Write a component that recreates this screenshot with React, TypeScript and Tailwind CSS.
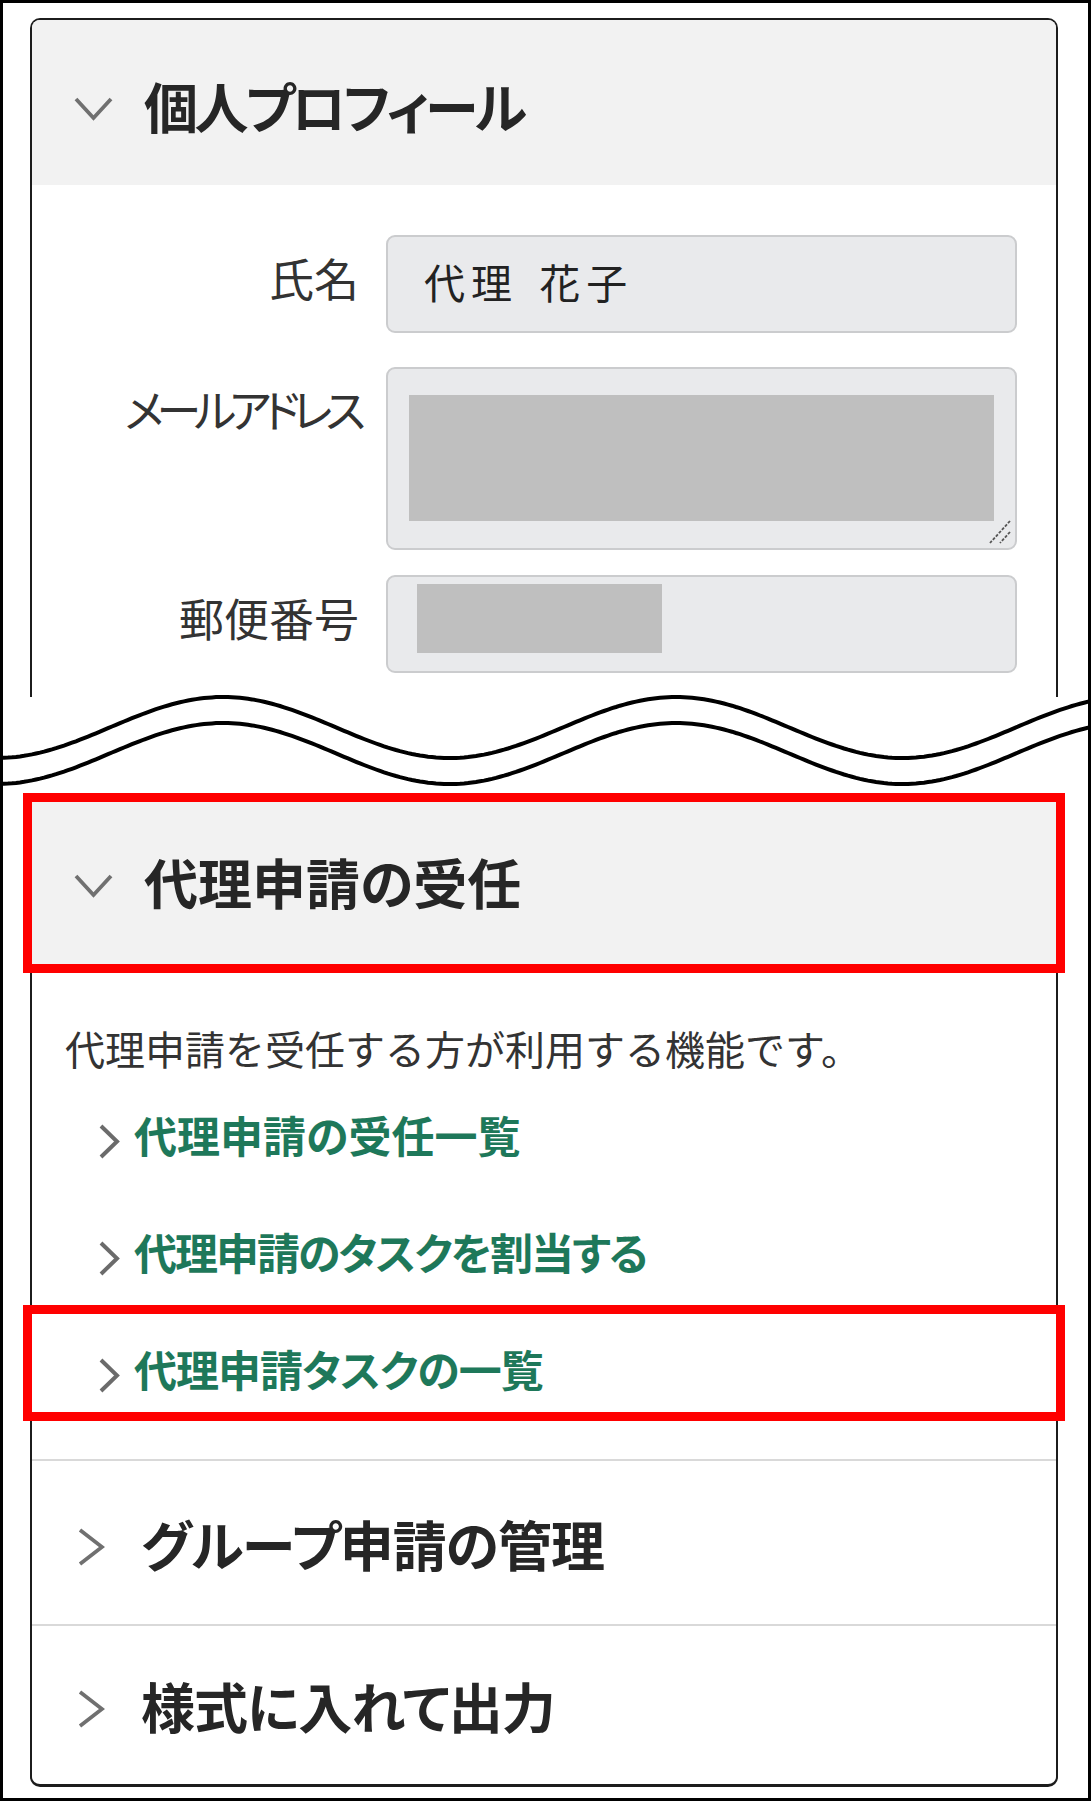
const FONT = "font-['Noto_Sans_CJK_JP','Noto_Sans',sans-serif]";

// y of the break line at x, in the wave svg's own coordinates
function wave(offset: number) {
  const pts: string[] = [];
  for (let x = -4; x <= 1096; x += 4) {
    const y = 37.5 + offset - 30.5 * Math.cos((2 * Math.PI * (x - 223)) / 453);
    pts.push(`${x},${y.toFixed(1)}`);
  }
  return pts;
}

function BreakLines() {
  const top = wave(0);
  const bottom = wave(26);
  return (
    <svg
      className="pointer-events-none absolute left-[-3px] top-[687px] h-[110px] w-[1091px] overflow-visible"
      viewBox="0 0 1091 110"
      aria-hidden
    >
      <polygon points={[...top, ...bottom.slice().reverse()].join(" ")} fill="#fff" />
      <polyline points={top.join(" ")} fill="none" stroke="#000" strokeWidth="4" />
      <polyline points={bottom.join(" ")} fill="none" stroke="#000" strokeWidth="4" />
    </svg>
  );
}

function ChevronDown() {
  return (
    <svg className="mt-[6px] h-[25px] w-[41px] shrink-0" viewBox="0 0 41 25" aria-hidden>
      <polyline points="3,3 20.5,22 38,3" fill="none" stroke="#707070" strokeWidth="3.8" />
    </svg>
  );
}

function ChevronRight() {
  return (
    <svg className="mt-[6px] h-[40px] w-[28px] shrink-0" viewBox="0 0 28 40" aria-hidden>
      <polyline points="3,3 25,20 3,37" fill="none" stroke="#707070" strokeWidth="3.8" />
    </svg>
  );
}

function LinkChevron() {
  return (
    <svg className="mt-[10px] h-[37px] w-[22px] shrink-0" viewBox="0 0 22 37" aria-hidden>
      <polyline points="3,3 19,18.5 3,34" fill="none" stroke="#6b6b6b" strokeWidth="4" />
    </svg>
  );
}

type HeaderProps = { title: string; open: boolean; titleClass: string };

function SectionHeader({ title, open, titleClass }: HeaderProps) {
  return (
    <div className="flex items-center">
      <div className={open ? "ml-[41px] flex w-[41px] justify-center" : "ml-[45px] flex w-[28px] justify-center"}>
        {open ? <ChevronDown /> : <ChevronRight />}
      </div>
      <span className={titleClass}>{title}</span>
    </div>
  );
}

function FieldLabel({ text, narrow }: { text: string; narrow?: boolean }) {
  return (
    <div
      className={
        narrow
          ? "w-[327px] shrink-0 whitespace-nowrap pt-[19px] text-right text-[45px] leading-none tracking-[-7px] text-[#333] [font-feature-settings:'palt']"
          : "w-[327px] shrink-0 pt-[20px] text-right text-[45px] leading-none text-[#333]"
      }
    >
      {text}
    </div>
  );
}

const links = [
  { label: "代理申請の受任一覧", cls: "tracking-[0px]" },
  { label: "代理申請のタスクを割当する", cls: "tracking-[-2px]" },
  { label: "代理申請タスクの一覧", cls: "tracking-[-1px]" },
];

export default function App() {
  return (
    <div className={`relative h-[1801px] w-[1091px] overflow-hidden border-[3px] border-black bg-white ${FONT}`}>
      {/* upper part of the card, cut by the break */}
      <div className="ml-[27px] mt-[15px] h-[679px] w-[1028px] overflow-hidden rounded-t-[10px] border-2 border-b-0 border-[#1c1c1c]">
        <div className="flex h-[165px] items-center bg-[#f2f2f2] pt-[6px]">
          <div className="w-full">
            <SectionHeader
              title="個人プロフィール"
              open
              titleClass="ml-[30px] whitespace-nowrap text-[54px] font-bold leading-none tracking-[-3.5px] text-[#262626] [font-feature-settings:'palt']"
            />
          </div>
        </div>

        <div className="pt-[50px]">
          <div className="flex">
            <FieldLabel text="氏名" />
            <div className="ml-[27px] flex h-[98px] w-[631px] items-center rounded-[9px] border-2 border-[#cbccce] bg-[#e9eaec] pb-[6px] pl-[36px] text-[41px] leading-none tracking-[6px] text-[#222] [word-spacing:6px]">
              代理 花子
            </div>
          </div>

          <div className="mt-[34px] flex">
            <FieldLabel text="メールアドレス" narrow />
            <div className="relative ml-[27px] h-[183px] w-[631px] rounded-[9px] border-2 border-[#cbccce] bg-[#e9eaec] pl-[21px] pt-[26px]">
              <div className="h-[126px] w-[585px] bg-[#bfbfbf]" />
              <svg className="absolute bottom-[3px] right-[3px] h-[26px] w-[24px]" viewBox="0 0 24 26" aria-hidden>
                <line x1="22" y1="2" x2="2" y2="24" stroke="#555" strokeWidth="1.8" strokeDasharray="3 1.5" />
                <line x1="22" y1="13" x2="12" y2="24" stroke="#555" strokeWidth="1.8" strokeDasharray="3 1.5" />
              </svg>
            </div>
          </div>

          <div className="mt-[25px] flex">
            <FieldLabel text="郵便番号" />
            <div className="ml-[27px] h-[98px] w-[631px] rounded-[9px] border-2 border-[#cbccce] bg-[#e9eaec] pl-[29px] pt-[7px]">
              <div className="h-[69px] w-[245px] bg-[#bfbfbf]" />
            </div>
          </div>
        </div>
      </div>

      <div className="h-[96px]" />

      {/* lower part of the card */}
      <div className="ml-[27px] h-[994px] w-[1028px] rounded-b-[10px] border-2 border-b-[3px] border-t-0 border-[#1c1c1c]">
        <div className="flex h-[172px] items-center bg-[#f2f2f2] pt-[6px]">
          <div className="w-full">
            <SectionHeader
              title="代理申請の受任"
              open
              titleClass="ml-[30px] whitespace-nowrap text-[54px] font-bold leading-none text-[#262626] [font-feature-settings:'palt']"
            />
          </div>
        </div>

        <div className="h-[494px] pl-[33px] pt-[63px]">
          <p className="text-[40px] leading-none text-[#333]">代理申請を受任する方が利用する機能です。</p>
          <ul className="mt-[45px] flex flex-col gap-[70px]">
            {links.map((l) => (
              <li key={l.label} className="flex items-start">
                <span className="ml-[33px]">
                  <LinkChevron />
                </span>
                <span
                  className={`ml-[14px] whitespace-nowrap text-[43px] font-bold leading-none text-[#1e785a] [font-feature-settings:'palt'] ${l.cls}`}
                >
                  {l.label}
                </span>
              </li>
            ))}
          </ul>
        </div>

        <div className="flex h-[165px] items-center border-t-2 border-[#d9d9d9] pt-[2px]">
          <SectionHeader
            title="グループ申請の管理"
            open={false}
            titleClass="ml-[36px] whitespace-nowrap text-[54px] font-bold leading-none tracking-[-1px] text-[#262626] [font-feature-settings:'palt']"
          />
        </div>
        <div className="flex h-[160px] items-center border-t-2 border-[#d9d9d9] pt-[2px]">
          <SectionHeader
            title="様式に入れて出力"
            open={false}
            titleClass="ml-[36px] whitespace-nowrap text-[54px] font-bold leading-none tracking-[-1px] text-[#262626] [font-feature-settings:'palt']"
          />
        </div>
      </div>

      <BreakLines />

      {/* red annotation frames */}
      <div className="pointer-events-none absolute left-[20px] top-[790px] h-[180px] w-[1042px] border-[9px] border-[#ff0000]" />
      <div className="pointer-events-none absolute left-[20px] top-[1302px] h-[116px] w-[1042px] border-[9px] border-[#ff0000]" />
    </div>
  );
}
